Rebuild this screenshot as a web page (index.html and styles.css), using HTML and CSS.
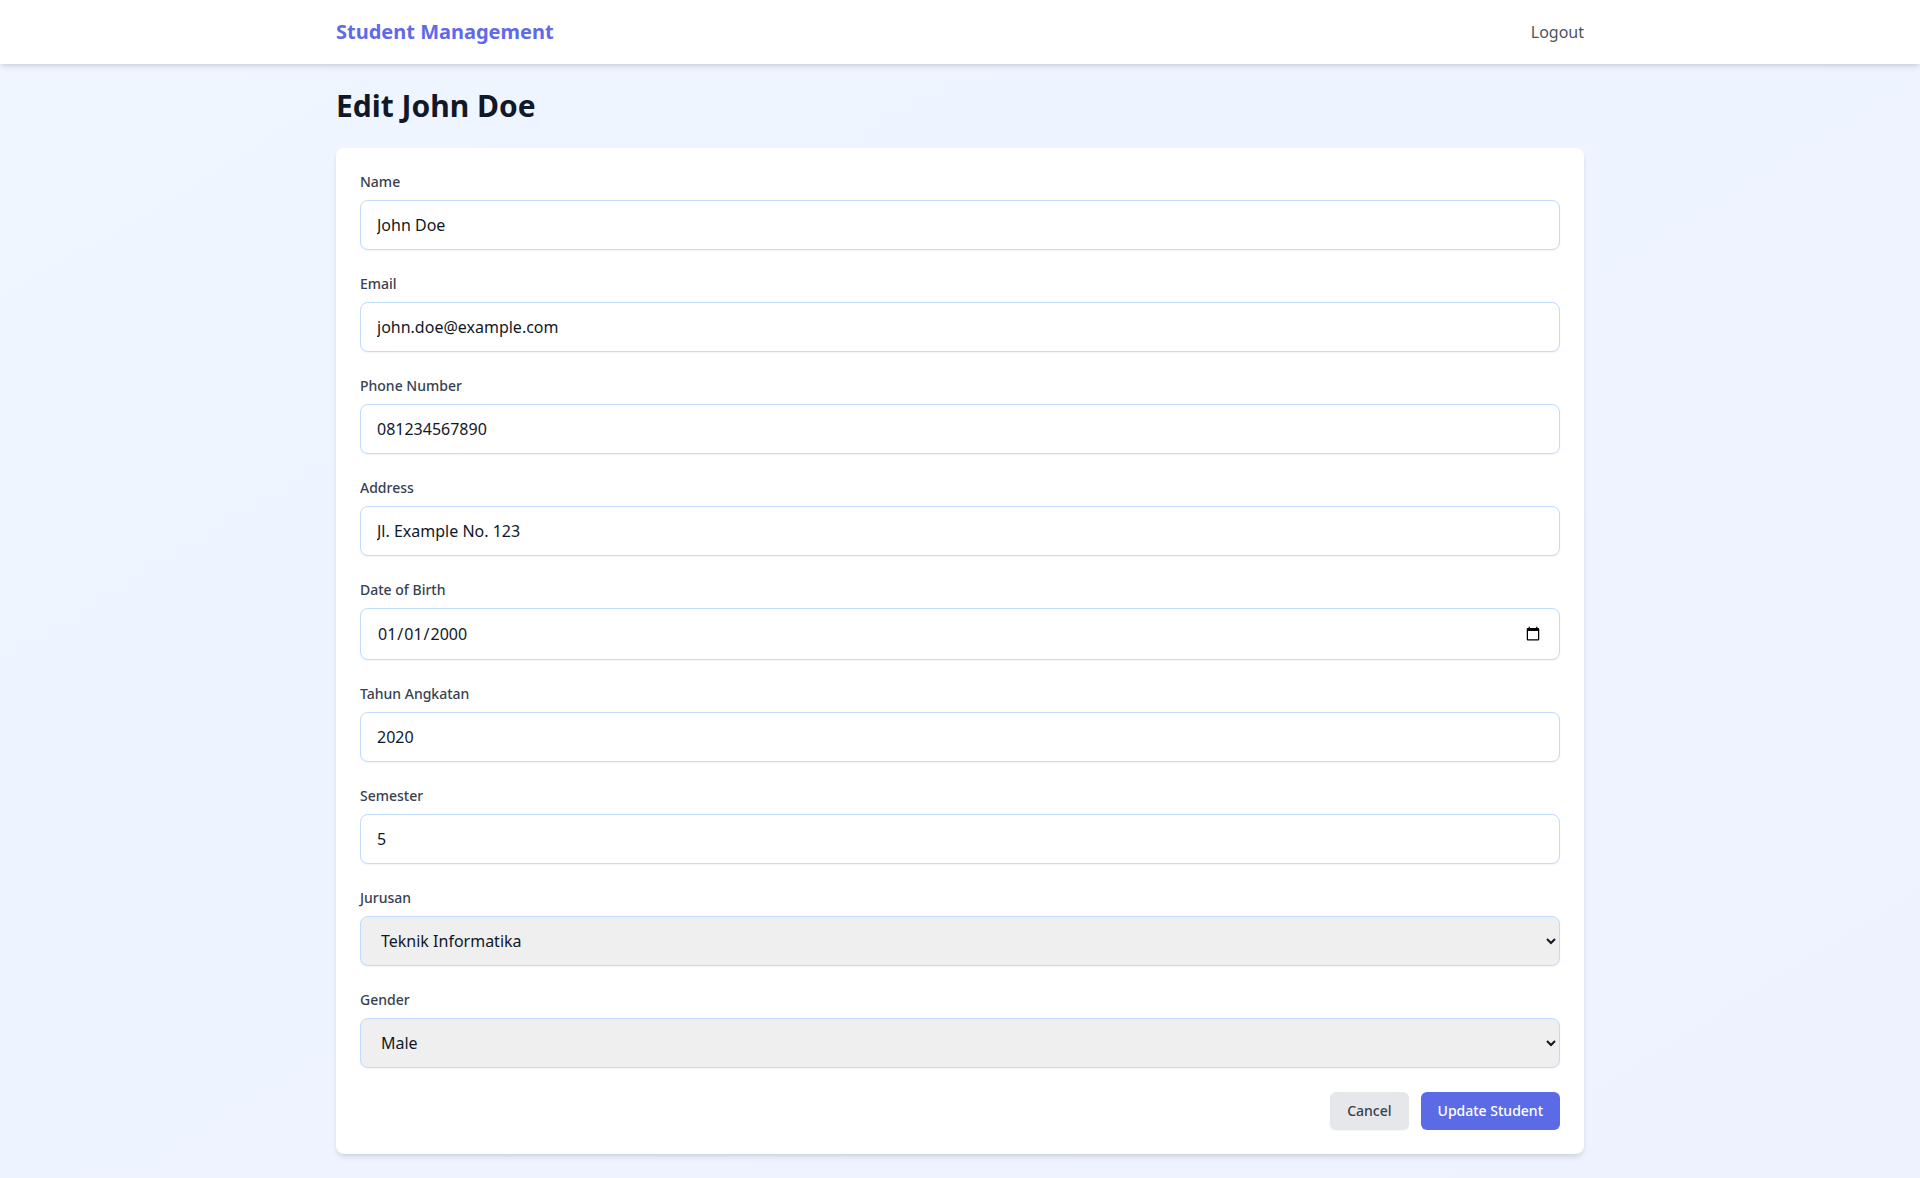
FILE: index.html
```html
<!DOCTYPE html>
<html lang="en">
<head>
<meta charset="utf-8">
<title>Edit Student</title>
<link rel="stylesheet" href="styles.css">
</head>
<body>
<nav class="navbar">
  <div class="container nav-inner">
    <a class="brand" href="#">Student Management</a>
    <a class="logout" href="#">Logout</a>
  </div>
</nav>
<main class="container main">
  <h1 class="page-title">Edit John Doe</h1>
  <form class="card">
    <div class="field">
      <label class="label" for="name">Name</label>
      <input class="input" id="name" type="text" value="John Doe">
    </div>
    <div class="field">
      <label class="label" for="email">Email</label>
      <input class="input" id="email" type="email" value="john.doe@example.com">
    </div>
    <div class="field">
      <label class="label" for="phone">Phone Number</label>
      <input class="input" id="phone" type="text" value="081234567890">
    </div>
    <div class="field">
      <label class="label" for="address">Address</label>
      <input class="input" id="address" type="text" value="Jl. Example No. 123">
    </div>
    <div class="field">
      <label class="label" for="dob">Date of Birth</label>
      <input class="input input-date" id="dob" type="date" value="2000-01-01">
    </div>
    <div class="field">
      <label class="label" for="tahun">Tahun Angkatan</label>
      <input class="input" id="tahun" type="number" value="2020">
    </div>
    <div class="field">
      <label class="label" for="semester">Semester</label>
      <input class="input" id="semester" type="number" value="5">
    </div>
    <div class="field">
      <label class="label" for="jurusan">Jurusan</label>
      <select class="input select" id="jurusan">
        <option selected>Teknik Informatika</option>
        <option>Sistem Informasi</option>
      </select>
    </div>
    <div class="field">
      <label class="label" for="gender">Gender</label>
      <select class="input select" id="gender">
        <option selected>Male</option>
        <option>Female</option>
      </select>
    </div>
    <div class="actions">
      <a class="btn btn-cancel" href="#">Cancel</a>
      <button class="btn btn-primary" type="submit">Update Student</button>
    </div>
  </form>
</main>
</body>
</html>
```

FILE: styles.css
```css
* {
  box-sizing: border-box;
}

html, body {
  margin: 0;
  padding: 0;
}

body {
  font-family: "Noto Sans", "Open Sans", sans-serif;
  background: linear-gradient(to bottom right, #eff6ff, #eef2ff);
  min-height: 1178px;
  color: #111827;
}

.container {
  max-width: 1280px;
  margin: 0 auto;
  padding: 0 16px;
}

.navbar {
  background: #ffffff;
  box-shadow: 0 4px 6px -1px rgba(0, 0, 0, 0.1), 0 2px 4px -2px rgba(0, 0, 0, 0.1);
  position: relative;
  z-index: 1;
}

.nav-inner {
  height: 64px;
  display: flex;
  align-items: center;
  justify-content: space-between;
}

.brand {
  font-size: 20px;
  line-height: 28px;
  font-weight: 700;
  color: #5f6ae8;
  text-decoration: none;
}

.logout {
  font-size: 16px;
  line-height: 24px;
  color: #4b5563;
  text-decoration: none;
}

.main {
  padding-top: 24px;
  padding-bottom: 24px;
}

.page-title {
  margin: 0 0 24px;
  font-size: 30px;
  line-height: 36px;
  font-weight: 700;
  color: #111827;
}

.card {
  background: #ffffff;
  border-radius: 8px;
  box-shadow: 0 4px 6px -1px rgba(0, 0, 0, 0.1), 0 2px 4px -2px rgba(0, 0, 0, 0.1);
  padding: 24px;
  display: flex;
  flex-direction: column;
  gap: 24px;
}

.field {
  display: flex;
  flex-direction: column;
  gap: 8px;
}

.label {
  font-size: 14px;
  line-height: 20px;
  font-weight: 500;
  color: #374151;
}

.input {
  display: block;
  width: 100%;
  height: 50px;
  padding: 12px 16px;
  font-family: "Noto Sans", "Open Sans", sans-serif;
  font-size: 16px;
  line-height: 24px;
  color: #111827;
  background: #ffffff;
  border: 1px solid #bfdbfe;
  border-radius: 8px;
  box-shadow: 0 1px 2px 0 rgba(0, 0, 0, 0.05);
  outline: none;
}

.input-date {
  height: 52px;
}

.input[type="number"] {
  -moz-appearance: textfield;
}

.input[type="number"]::-webkit-inner-spin-button,
.input[type="number"]::-webkit-outer-spin-button {
  -webkit-appearance: none;
  margin: 0;
}

.select {
  background-color: #efefef;
  padding-left: 16px;
}

.actions {
  display: flex;
  justify-content: flex-end;
  gap: 12px;
}

.btn {
  display: inline-block;
  padding: 8px 16px;
  font-family: "Noto Sans", "Open Sans", sans-serif;
  font-size: 14px;
  line-height: 20px;
  font-weight: 500;
  border: 1px solid transparent;
  border-radius: 6px;
  text-decoration: none;
  cursor: pointer;
}

.btn-cancel {
  background: #e5e7eb;
  color: #374151;
  box-shadow: 0 1px 2px 0 rgba(0, 0, 0, 0.05);
}

.btn-primary {
  background: #5b6be6;
  color: #ffffff;
}
```
